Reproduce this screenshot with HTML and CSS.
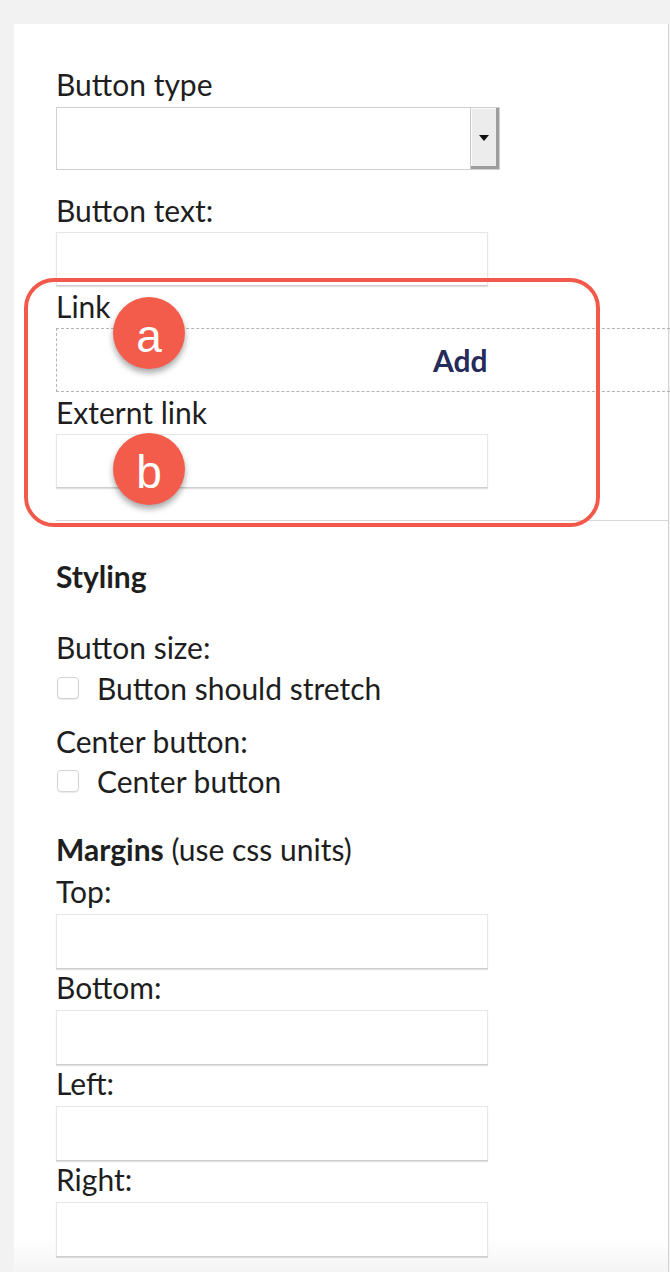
FILE: index.html
```html
<!DOCTYPE html>
<html lang="en">
<head>
<meta charset="utf-8">
<title>Button settings</title>
<link rel="stylesheet" href="styles.css">
</head>
<body>
<div class="panel">
  <div class="section-main">
    <label class="lbl lbl-first">Button type</label>
    <div class="select">
      <div class="select-value"></div>
      <div class="select-btn"><span class="caret"></span></div>
    </div>

    <label class="lbl lbl-gap">Button text:</label>
    <div class="txt txt-main"></div>

    <label class="lbl lbl-tight">Link</label>
    <div class="picker"><span class="picker-add">Add</span></div>

    <label class="lbl lbl-tight">Externt link</label>
    <div class="txt txt-main"></div>
  </div>

  <div class="section-style">
    <div class="heading">Styling</div>

    <label class="lbl lbl-group">Button size:</label>
    <div class="check-row"><span class="checkbox"></span><span>Button should stretch</span></div>

    <label class="lbl lbl-sub">Center button:</label>
    <div class="check-row"><span class="checkbox"></span><span>Center button</span></div>

    <div class="lbl lbl-margins"><b class="heading-inline">Margins</b> (use css units)</div>
    <label class="lbl lbl-top">Top:</label>
    <div class="txt txt-m"></div>
    <label class="lbl">Bottom:</label>
    <div class="txt txt-m"></div>
    <label class="lbl">Left:</label>
    <div class="txt txt-m"></div>
    <label class="lbl">Right:</label>
    <div class="txt txt-m"></div>
  </div>
</div>

<div class="annot-box"></div>
<span class="badge badge-a">a</span>
<span class="badge badge-b">b</span>
</body>
</html>
```

FILE: styles.css
```css
html, body {
  margin: 0;
  padding: 0;
}

body {
  background: #f3f2f2;
  font-family: Lato, "Open Sans", sans-serif;
  color: #1e1e1e;
  width: 670px;
  height: 1272px;
  overflow: hidden;
  position: relative;
}

.panel {
  margin: 24px 0 0 14px;
  width: 655px;
  height: 1248px;
  box-sizing: border-box;
  background: linear-gradient(to bottom, #ffffff calc(100% - 34px), #f4f4f4 100%);
  border-right: 1px solid #d4d4d4;
}

.section-main {
  margin-left: 42px;
  padding: 42px 0 32px 0;
  border-bottom: 1px solid #d8d8d8;
}

.section-style {
  padding: 37px 0 0 42px;
}

.lbl {
  display: block;
  font-size: 30px;
  line-height: 36px;
  margin: 0;
}

.lbl-gap { margin-top: 22px; }
.lbl-tight { margin-top: 2px; }
.lbl-group { margin-top: 35px; }
.lbl-sub { margin-top: 17px; }
.lbl-margins { margin-top: 32px; }
.lbl-top { margin-top: 6px; }

.heading {
  font-size: 30px;
  line-height: 36px;
  font-weight: 700;
}

.heading-inline {
  font-weight: 700;
}

.select {
  display: flex;
  width: 444px;
  height: 63px;
  margin-top: 5px;
  box-sizing: border-box;
  border: 1px solid #d0d0d0;
  background: #fff;
}

.select-value {
  flex: 1;
}

.select-btn {
  width: 28px;
  display: flex;
  align-items: center;
  justify-content: center;
  background: #ececec;
  border-left: 1px solid #c8c8c8;
  box-shadow: inset -3px -3px 0 #9d9d9d, inset 1px 1px 0 #fafafa;
}

.caret {
  width: 0;
  height: 0;
  border-left: 5px solid transparent;
  border-right: 5px solid transparent;
  border-top: 6px solid #111;
  margin: -2px 2px 0 0;
}

.txt {
  width: 432px;
  box-sizing: border-box;
  background: #fff;
  border: 1px solid #e6e6e6;
  border-bottom-color: #cfcfcf;
  box-shadow: 0 1px 1px rgba(0, 0, 0, 0.12);
}

.txt-main {
  height: 54px;
  margin-top: 4px;
}

.txt-m {
  height: 55px;
  margin-top: 5px;
}

.picker {
  width: 614px;
  height: 64px;
  margin-top: 4px;
  box-sizing: border-box;
  border: 1px dashed #b4b4b4;
  border-right: none;
  display: flex;
  align-items: center;
  padding-left: 376px;
}

.picker-add {
  font-size: 30px;
  font-weight: 700;
  color: #262b5a;
  line-height: 36px;
}

.check-row {
  display: flex;
  align-items: center;
  gap: 18px;
  margin-top: 5px;
  font-size: 30px;
  line-height: 36px;
}

.lbl-sub + .check-row { margin-top: 4px; }

.checkbox {
  width: 22px;
  height: 22px;
  margin-left: 1px;
  box-sizing: border-box;
  border: 1px solid #d3d3d3;
  border-radius: 4px;
  background: #fff;
  box-shadow: 0 1px 1px rgba(0, 0, 0, 0.08);
}

.annot-box {
  position: absolute;
  left: 24px;
  top: 278px;
  width: 576px;
  height: 249px;
  box-sizing: border-box;
  border: 4px solid #f2594a;
  border-radius: 30px;
}

.badge {
  position: absolute;
  left: 113px;
  width: 72px;
  height: 72px;
  border-radius: 50%;
  background: #f35c4b;
  color: #fff;
  font-family: "Liberation Sans", Arial, sans-serif;
  font-size: 46px;
  display: flex;
  align-items: center;
  justify-content: center;
  box-sizing: border-box;
  padding-top: 6px;
  box-shadow: 0 4px 6px rgba(0, 0, 0, 0.35);
}

.badge-a { top: 297px; }
.badge-b { top: 433px; }
```
